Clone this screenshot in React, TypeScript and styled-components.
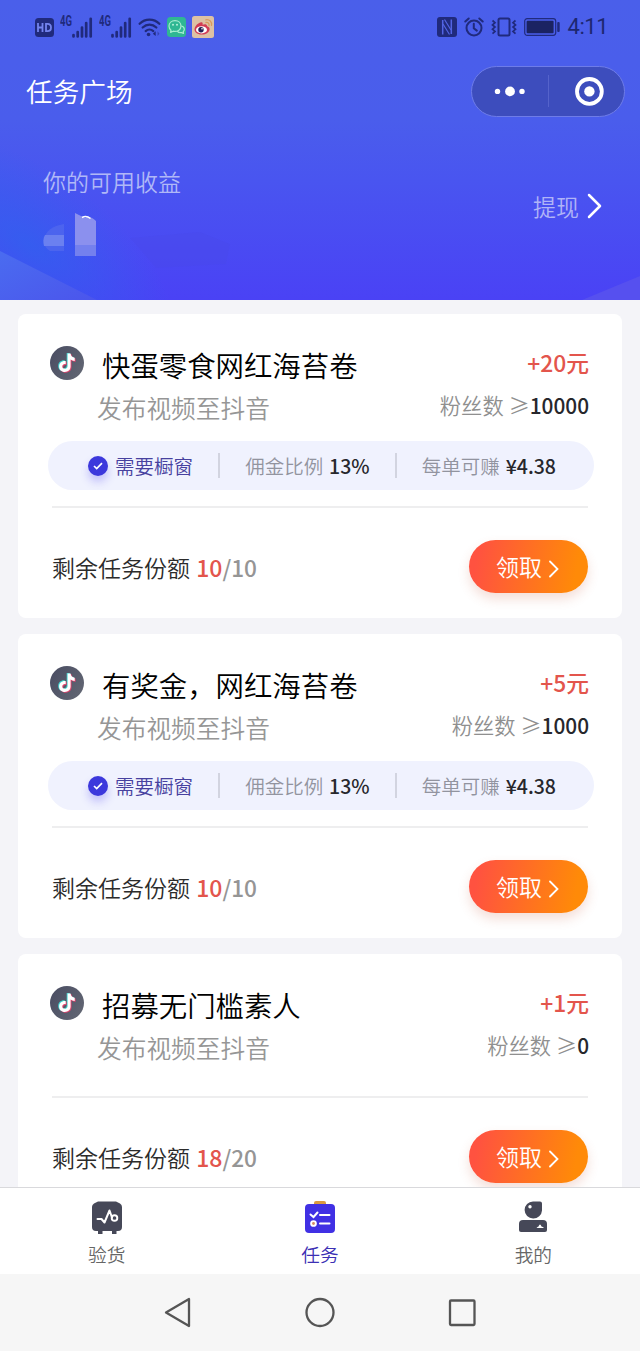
import React from 'react';
import styled, { createGlobalStyle } from 'styled-components';

const GlobalStyle = createGlobalStyle`
  * { box-sizing: border-box; }
  body {
    margin: 0;
    background: #f4f4f8;
    font-family: "Noto Sans CJK SC", "Noto Sans", sans-serif;
    font-weight: 350;
  }
  svg { display: block; flex: none; }
`;

const Screen = styled.div`
  width: 640px;
  height: 1351px;
  display: flex;
  flex-direction: column;
  overflow: hidden;
  background: #f4f4f8;
`;

const Hero = styled.header`
  flex: none;
  height: 300px;
  display: flex;
  flex-direction: column;
  position: relative;
  background: linear-gradient(180deg, #4a5fea 0%, #4a5dec 40%, #4955f0 60%, #4a42f5 100%);
`;

const HeroArt = styled.svg`
  position: absolute;
  left: 0;
  bottom: 0;
`;

const StatusBar = styled.div`
  height: 54px;
  padding: 0 32px 0 35px;
  display: flex;
  justify-content: space-between;
  align-items: center;
  position: relative;
`;

const StatusGroup = styled.div<{ $gap: number }>`
  display: flex;
  align-items: center;
  gap: ${p => p.$gap}px;
`;

const Clock = styled.span`
  font: 400 22px/24px Roboto, sans-serif;
  color: #1d2770;
  letter-spacing: -0.5px;
`;

const TitleBar = styled.div`
  height: 74px;
  padding: 0 15px 0 26px;
  display: flex;
  justify-content: space-between;
  align-items: center;
  position: relative;
`;

const PageTitle = styled.h1`
  margin: 0;
  font-size: 26.7px;
  line-height: 40px;
  font-weight: 350;
  color: #fff;
`;

const Capsule = styled.div`
  width: 154px;
  height: 51px;
  border-radius: 26px;
  border: 1px solid #6e7ce8;
  background: #3d4dbd;
  display: flex;
  align-items: center;
`;

const CapsuleHalf = styled.div`
  width: 76px;
  height: 32px;
  display: flex;
  align-items: center;
  justify-content: center;
  & + & { border-left: 1px solid #5563cb; padding-left: 4px; }
`;

const Balance = styled.div`
  padding: 36px 37px 0 43px;
  display: flex;
  justify-content: space-between;
  position: relative;
`;

const BalanceLabel = styled.div`
  font-size: 23px;
  line-height: 34px;
  color: #b0b8f7;
`;

const Withdraw = styled.div`
  margin-top: 25px;
  height: 34px;
  display: flex;
  align-items: center;
  gap: 8px;
  font-size: 23px;
  line-height: 34px;
  color: #b0b4f7;
`;

const TaskList = styled.main`
  flex: 1;
  min-height: 0;
  overflow: hidden;
  padding: 14px 18px 0;
  display: flex;
  flex-direction: column;
  gap: 16px;
`;

const Card = styled.article`
  flex: none;
  background: #fff;
  border-radius: 8px;
  padding: 0 34px;
`;

const CardHead = styled.div`
  height: 126px;
  padding-top: 30px;
  display: flex;
`;

const Avatar = styled.div`
  margin: 2px 0 0 -2px;
  width: 34px;
  height: 34px;
`;

const Names = styled.div`
  flex: 1;
  padding-left: 13px;
`;

const TaskName = styled.div`
  padding-left: 5px;
  font-size: 28.4px;
  line-height: 42px;
  font-weight: 350;
  color: #000;
  white-space: nowrap;
`;

const TaskDesc = styled.div`
  font-size: 24.7px;
  line-height: 42px;
  color: #969696;
`;

const Terms = styled.div`
  margin-right: -1px;
  text-align: right;
  white-space: nowrap;
`;

const Reward = styled.div`
  font-size: 22.8px;
  line-height: 38px;
  font-weight: 500;
  color: #e3554c;
`;

const Fans = styled.div`
  margin-top: 2px;
  font-size: 21.3px;
  line-height: 42px;
  color: #8f8f8f;
  b { font-size: 20.8px; }
`;

const Strong = styled.b`
  font-weight: 500;
  color: #27272c;
`;

const Pill = styled.div`
  height: 49px;
  margin: 1px -6px 1px -4px;
  padding: 0 38px 0 40px;
  border-radius: 25px;
  background: #f0f2fe;
  display: flex;
  align-items: center;
  justify-content: space-between;
  font-size: 19.5px;
  line-height: 30px;
  color: #92949f;
  white-space: nowrap;
  b { margin-left: 1.5px; }
`;

const Need = styled.span`
  display: flex;
  align-items: center;
  gap: 7px;
  color: #47419f;
`;

const CheckDot = styled.span`
  width: 20px;
  height: 20px;
  border-radius: 50%;
  background: #3c38dc;
  box-shadow: 0 6px 9px rgba(80, 70, 240, 0.28);
  display: flex;
  align-items: center;
  justify-content: center;
`;

const Divider = styled.i`
  width: 2px;
  height: 25px;
  margin-top: -1px;
  background: #d2d4e0;
`;

const CardFoot = styled.div`
  margin-top: 16px;
  height: 112px;
  border-top: 2px solid #eeeeef;
  padding-top: 32px;
  display: flex;
  justify-content: space-between;
  align-items: flex-start;
`;

const Quota = styled.div`
  margin-top: 9px;
  font-size: 23px;
  line-height: 36px;
  color: #2b2b2b;
`;

const Left = styled.span`
  margin-left: 1px;
  font-weight: 500;
  color: #e3554c;
`;

const Total = styled.span`
  font-size: 22.6px;
  font-weight: 500;
  color: #959595;
`;

const Claim = styled.button`
  width: 119px;
  height: 53px;
  border: 0;
  border-radius: 27px;
  padding: 0 0 2px 27px;
  display: flex;
  align-items: center;
  gap: 7px;
  font: 350 23px/34px "Noto Sans CJK SC", sans-serif;
  color: #fff;
  background: linear-gradient(100deg, #ff5240 8%, #ff8a08 88%);
  box-shadow: 0 6px 12px rgba(200, 90, 60, 0.2);
  svg { margin-top: 7px; }
`;

const TabBar = styled.nav`
  flex: none;
  height: 87px;
  border-top: 1px solid #d9d9dc;
  background: #fff;
  display: flex;
  position: relative;
`;

const Tab = styled.div<{ $active?: boolean }>`
  flex: 1;
  padding-top: 12px;
  display: flex;
  flex-direction: column;
  align-items: center;
  gap: 4px;
  font-size: 18.7px;
  line-height: 30px;
  color: ${p => (p.$active ? '#3c30b4' : '#666')};
`;

const SystemNav = styled.div`
  flex: none;
  height: 77px;
  background: #f6f6f6;
  display: flex;
  justify-content: center;
  align-items: center;
  gap: 110px;
`;

const INK = '#202a7c';

const HdIcon = () => (
  <svg width="19" height="19" viewBox="0 0 19 19">
    <rect width="19" height="19" rx="3.5" fill={INK} />
    <path d="M3 5v9M3 9.500h4.500M7.500 5v9M11 5.800v7.400h1.500c2.300 0 3.500-1.200 3.500-3.700s-1.200-3.700-3.500-3.700z" fill="none" stroke="#7484ee" strokeWidth="1.800" />
  </svg>
);

const NetLabel = styled.span`
  align-self: flex-start;
  margin-top: -2px;
  font: 700 14px/12px "Roboto", sans-serif;
  color: ${INK};
  transform: scaleX(0.68);
  transform-origin: left;
  width: 11px;
`;

const Signal = () => (
  <StatusGroup $gap={0}>
    <NetLabel>4G</NetLabel>
    <svg width="22" height="21" viewBox="0 0 22 21">
      <path d="M2.500 19.500v-1.500M6.700 19.500v-4.500M11 19.500v-9M15.200 19.500V6M19.700 19.500V1.800" stroke={INK} strokeWidth="2.700" strokeLinecap="round" />
    </svg>
  </StatusGroup>
);

const WifiIcon = () => (
  <svg width="23" height="19" viewBox="0 0 24 20">
    <g fill="none" stroke={INK} strokeWidth="2.400" strokeLinecap="round">
      <path d="M1.600 6C7.500.200 16.500.200 22.400 6" />
      <path d="M4.800 10C9 6 15 6 19.200 10" />
      <path d="M8 13.700c2.300-2 5.700-2 8 0" />
    </g>
    <circle cx="11" cy="17.400" r="1.900" fill={INK} />
    <path d="M18.500 14v5l-3-2.500z" fill={INK} />
    <path d="M20.500 14v5l2-2.500z" fill={INK} opacity=".5" />
  </svg>
);

const ChatIcon = () => (
  <svg width="19" height="20" viewBox="0 0 19 20">
    <rect width="19" height="20" rx="3.500" fill="#2fb793" />
    <g fill="none" stroke="#a5ecd0" strokeWidth="1.200" strokeLinejoin="round">
      <path d="M4 13.200l-.4 2.200 2.600-1.200c4 1 7.800-1.400 7.800-5.200 0-3.200-2.600-5.300-6-5.300S2 5.900 2 9c0 1.800.8 3.200 2 4.200z" />
      <path d="M14.300 9c2 .4 3 1.600 3 3.300 0 1-.4 1.800-1.100 2.400l.3 1.800-1.900-.9c-2 .3-3.500-.3-4.300-1.500" />
    </g>
    <circle cx="6" cy="7.800" r="1" fill="#b5f0d8" />
    <circle cx="10" cy="7.800" r="1" fill="#b5f0d8" />
  </svg>
);

const WeiboIcon = () => (
  <svg width="22" height="22" viewBox="0 0 22 22">
    <rect width="22" height="22" rx="2.500" fill="#ddc1a4" />
    <path d="M2.500 13.500c0-3.500 4.500-7.500 7-7.300 1.500.2 1.300 1.700 1 2.500 2-.8 4.500-1 4.600 1.500 2 .7 2.500 1.600 2.500 3 0 3-3.700 5.300-7.600 5.300s-7.500-2-7.500-5z" fill="#d23b54" />
    <ellipse cx="9.500" cy="13.800" rx="5.500" ry="3.600" fill="#fff" />
    <circle cx="9" cy="13.800" r="2.700" fill="#252052" />
    <circle cx="10" cy="12.800" r=".8" fill="#fff" />
    <path d="M14 6.500c2-.4 3.500 1 3 3M13.800 3.800c3.700-.6 6.400 2 5.700 5.600" fill="none" stroke="#d99a5c" strokeWidth="1.300" strokeLinecap="round" />
  </svg>
);

const NfcIcon = () => (
  <svg width="20" height="20" viewBox="0 0 20 20">
    <rect width="20" height="20" rx="3" fill={INK} />
    <path d="M5.700 17.500V3M14.300 2.500V17" stroke="#5264e4" strokeWidth="1.500" />
    <path d="M7.500 2.500l6.500 10.500M6 7l6.500 10.500" stroke="#5264e4" strokeWidth="1.200" />
  </svg>
);

const AlarmIcon = () => (
  <svg width="20" height="20" viewBox="0 0 20 20" fill="none" stroke={INK} strokeWidth="2" strokeLinecap="round">
    <circle cx="10" cy="11" r="7.500" />
    <path d="M9.800 6.800v4.500l3 2.300M1.300 4.500l3.400-3M18.700 4.500l-3.400-3" />
  </svg>
);

const VibrateIcon = () => (
  <svg width="26" height="20" viewBox="0 0 26 20" fill="none" stroke={INK} strokeWidth="2">
    <rect x="7.500" y="1.500" width="11" height="17" rx="1.500" />
    <path d="M1.500 3.500l2.500 2.200-2.500 2.200L4 10l-2.500 2.200L4 14.400l-2.500 2.200M24.500 3.500L22 5.700l2.500 2.200L22 10l2.500 2.200-2.500 2.200 2.500 2.200" strokeWidth="1.700" />
  </svg>
);

const BatteryIcon = () => (
  <svg width="37" height="18" viewBox="0 0 37 18">
    <rect x=".7" y=".7" width="31" height="16.600" rx="2.500" fill="none" stroke={INK} strokeWidth="1.200" />
    <rect x="2.600" y="2.800" width="27" height="12.400" rx="1" fill="#1b2362" />
    <rect x="33.200" y="4" width="2.500" height="10" rx="1" fill={INK} />
  </svg>
);

const TiktokIcon = ({ id }: { id: string }) => {
  const note = 'M17.600 7.500h3c.3 2.500 1.800 4 4.100 4.200v3.200c-1.600 0-2.900-.5-4.100-1.300v6.700c0 3.600-2.600 5.700-5.800 5.700-3.300 0-5.700-2.300-5.700-5.500 0-3.500 3-6 6.600-5.500v3.200c-1.900-.4-3.400.7-3.400 2.300 0 1.300 1 2.300 2.400 2.300 1.700 0 2.900-1.100 2.900-2.900z';
  return (
    <svg width="34" height="34" viewBox="0 0 34 34">
      <defs>
        <linearGradient id={id} x1="0" x2="1" y1="0.200" y2="0.800">
          <stop stopColor="#4a4e63" />
          <stop offset="1" stopColor="#626673" />
        </linearGradient>
      </defs>
      <circle cx="17" cy="17" r="17" fill={`url(#${id})`} />
      <path d={note} fill="#41d6d2" transform="translate(-.9 -.6)" />
      <path d={note} fill="#e2416c" transform="translate(.9 .8)" />
      <path d={note} fill="#fff" />
    </svg>
  );
};

interface Task {
  name: string;
  reward: number;
  fans: number;
  left: number;
  total: number;
  rate?: string;
  earn?: string;
}

const tasks: Task[] = [
  { name: '快蛋零食网红海苔卷', reward: 20, fans: 10000, left: 10, total: 10, rate: '13%', earn: '¥4.38' },
  { name: '有奖金，网红海苔卷', reward: 5, fans: 1000, left: 10, total: 10, rate: '13%', earn: '¥4.38' },
  { name: '招募无门槛素人', reward: 1, fans: 0, left: 18, total: 20 },
];

const TaskCard = ({ task, index }: { task: Task; index: number }) => (
  <Card>
    <CardHead>
      <Avatar><TiktokIcon id={`disc${index}`} /></Avatar>
      <Names>
        <TaskName>{task.name}</TaskName>
        <TaskDesc>发布视频至抖音</TaskDesc>
      </Names>
      <Terms>
        <Reward>+{task.reward}元</Reward>
        <Fans>粉丝数 ≥<Strong>{task.fans}</Strong></Fans>
      </Terms>
    </CardHead>
    {task.rate && (
      <Pill>
        <Need>
          <CheckDot>
            <svg width="10" height="8" viewBox="0 0 10 8"><path d="M1 4l2.700 2.600L9 1.200" fill="none" stroke="#fff" strokeWidth="1.700" /></svg>
          </CheckDot>
          需要橱窗
        </Need>
        <Divider />
        <span>佣金比例 <Strong>{task.rate}</Strong></span>
        <Divider />
        <span>每单可赚 <Strong>{task.earn}</Strong></span>
      </Pill>
    )}
    <CardFoot>
      <Quota>剩余任务份额 <Left>{task.left}</Left><Total>/{task.total}</Total></Quota>
      <Claim>
        领取
        <svg width="10" height="18" viewBox="0 0 10 18"><path d="M1 1.500L8.500 9 1 16.500" fill="none" stroke="#fff" strokeWidth="1.800" strokeLinecap="round" /></svg>
      </Claim>
    </CardFoot>
  </Card>
);

export default function App() {
  return (
    <Screen>
      <GlobalStyle />
      <Hero>
        <HeroArt width="640" height="180" viewBox="0 0 640 180">
          <defs>
            <radialGradient id="glow" gradientUnits="userSpaceOnUse" cx="0" cy="0" r="1" gradientTransform="translate(30 125) rotate(35) scale(165 75)">
              <stop stopColor="#2f62ee" stopOpacity=".75" />
              <stop offset="1" stopColor="#2f62ee" stopOpacity="0" />
            </radialGradient>
            <linearGradient id="slope" x1="0" x2="1" y1="0" y2="1">
              <stop stopColor="#4a6cf0" />
              <stop offset="1" stopColor="#4b55ec" />
            </linearGradient>
          </defs>
          <rect width="640" height="180" fill="url(#glow)" />
          <path d="M0 131L97 180H0z" fill="url(#slope)" />
          <path d="M582 180L640 156V180z" fill="#5650ef" />
          <path d="M130 118L200 112l30 12-4 20-70 4z" fill="#4a49e8" opacity=".3" />
          <path d="M44 119c2-8 8-13 20-15v27H50c-5-3-7-8-6-12z" fill="#5268ee" opacity=".75" />
          <path d="M45 115h19v11H44c-1-4-1-8 1-11z" fill="#6b80f0" />
          <path d="M75 93l10 5c3-2 7-1 11 3v35H75z" fill="#8b90ee" />
          <path d="M75 125h21v11H75z" fill="#7480ee" />
          <path d="M82 97.500c3-1.500 6-1 8.500 1" fill="none" stroke="#fff" strokeWidth="1.500" />
        </HeroArt>
        <StatusBar>
          <StatusGroup $gap={6}>
            <HdIcon />
            <Signal />
            <Signal />
            <WifiIcon />
            <ChatIcon />
            <WeiboIcon />
          </StatusGroup>
          <StatusGroup $gap={7}>
            <NfcIcon />
            <AlarmIcon />
            <VibrateIcon />
            <BatteryIcon />
            <Clock>4:11</Clock>
          </StatusGroup>
        </StatusBar>
        <TitleBar>
          <PageTitle>任务广场</PageTitle>
          <Capsule>
            <CapsuleHalf>
              <svg width="32" height="12" viewBox="0 0 32 12" fill="#fff"><circle cx="3.500" cy="6.400" r="2.700" /><circle cx="16" cy="6.400" r="4.900" /><circle cx="28" cy="6.400" r="2.700" /></svg>
            </CapsuleHalf>
            <CapsuleHalf>
              <svg width="30" height="30" viewBox="0 0 30 30"><circle cx="15.400" cy="15.400" r="12.400" fill="none" stroke="#fff" strokeWidth="3.800" /><circle cx="15.400" cy="15.400" r="5.200" fill="#fff" /></svg>
            </CapsuleHalf>
          </Capsule>
        </TitleBar>
        <Balance>
          <BalanceLabel>你的可用收益</BalanceLabel>
          <Withdraw>
            提现
            <svg width="16" height="26" viewBox="0 0 16 26"><path d="M2 2l11 11L2 24" fill="none" stroke="#fff" strokeWidth="2.500" strokeLinecap="round" strokeLinejoin="round" /></svg>
          </Withdraw>
        </Balance>
      </Hero>
      <TaskList>
        {tasks.map((t, i) => <TaskCard key={t.name} task={t} index={i} />)}
      </TaskList>
      <TabBar>
        <Tab>
          <svg width="32" height="35" viewBox="0 0 32 35">
            <path d="M7 1.500h18l4 2q2 1 2 3.500v20q0 4-4 4H5q-4 0-4-4V7q0-2.500 2-3.500zM7 30h4.500v4H7zM21 30h4.500v4H21z" fill="#464858" />
            <path d="M6.500 19h4l3 3.500 5-12 2.500 7" fill="none" stroke="#fff" strokeWidth="2" strokeLinejoin="round" strokeLinecap="round" />
            <circle cx="23.500" cy="18" r="2.800" fill="none" stroke="#fff" strokeWidth="1.900" />
          </svg>
          验货
        </Tab>
        <Tab $active>
          <svg width="32" height="35" viewBox="0 0 32 35">
            <path d="M10 5V3q0-2 2-2h8q2 0 2 2v2z" fill="#d99a3f" />
            <rect x="1" y="4" width="30" height="29" rx="4" fill="#4030e4" />
            <path d="M6.500 14.500l3 2.500 4-4.500M16 15h9.500M16 23.500h9.500" fill="none" stroke="#fff" strokeWidth="2" strokeLinecap="round" />
            <circle cx="9.500" cy="23.500" r="2.400" fill="#d58a63" stroke="#fff" strokeWidth="1.900" />
          </svg>
          任务
        </Tab>
        <Tab>
          <svg width="32" height="35" viewBox="0 0 32 35">
            <path d="M16 1.500h7q2 0 2 2v7a8.700 8.500 0 1 1-9-9z" fill="#464858" />
            <circle cx="13" cy="6.800" r="1.700" fill="#fff" />
            <path d="M6 20h20q4 0 4 4v6q0 2-2 2H4q-2 0-2-2v-6q0-4 4-4z" fill="#464858" />
            <path d="M19.500 28q1-1.500 2-1.500 1.500-4 3 0 1.500 0 2.500 1.500z" fill="#fff" />
          </svg>
          我的
        </Tab>
      </TabBar>
      <SystemNav>
        <svg width="32" height="32" viewBox="0 0 32 32"><path d="M27 2v27L4 15.500z" fill="none" stroke="#555" strokeWidth="2.300" strokeLinejoin="round" /></svg>
        <svg width="32" height="32" viewBox="0 0 32 32"><circle cx="16" cy="15.500" r="13.500" fill="none" stroke="#555" strokeWidth="2.300" /></svg>
        <svg width="32" height="32" viewBox="0 0 32 32"><rect x="4" y="3.500" width="24.500" height="24.500" rx="1" fill="none" stroke="#555" strokeWidth="2.300" /></svg>
      </SystemNav>
    </Screen>
  );
}
